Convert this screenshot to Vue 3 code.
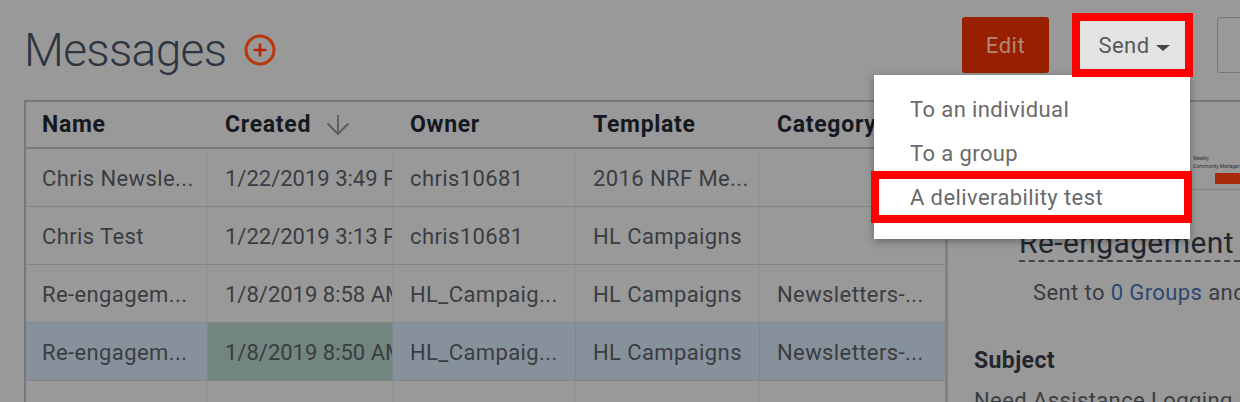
<script setup>
const columns = ['Name', 'Created', 'Owner', 'Template', 'Category']

const rows = [
  { name: 'Chris Newsle...', created: '1/22/2019 3:49 PM', owner: 'chris10681', template: '2016 NRF Me...', category: '' },
  { name: 'Chris Test', created: '1/22/2019 3:13 PM', owner: 'chris10681', template: 'HL Campaigns', category: '' },
  { name: 'Re-engagem...', created: '1/8/2019 8:58 AM', owner: 'HL_Campaig...', template: 'HL Campaigns', category: 'Newsletters-...' },
  { name: 'Re-engagem...', created: '1/8/2019 8:50 AM', owner: 'HL_Campaig...', template: 'HL Campaigns', category: 'Newsletters-...', selected: true },
  { name: '', created: '', owner: '', template: '', category: '' },
]

const sendOptions = ['To an individual', 'To a group', 'A deliverability test']
</script>

<template>
  <div class="page">
    <header class="top">
      <div class="heading">
        <h1 class="title">Messages</h1>
        <svg class="add-icon" width="32" height="32" viewBox="0 0 32 32" fill="none">
          <circle cx="16" cy="16" r="14" stroke="#b8360c" stroke-width="3" />
          <path d="M16 9.5v13M9.5 16h13" stroke="#b8240a" stroke-width="2.6" />
        </svg>
      </div>
      <div class="actions">
        <button class="btn btn-edit">Edit</button>
        <button class="btn btn-send">Send <span class="caret"></span></button>
        <button class="btn btn-more"></button>
      </div>
    </header>

    <main class="content">
      <div class="table">
        <div class="row head">
          <div v-for="col in columns" :key="col" class="cell">
            {{ col }}
            <svg v-if="col === 'Created'" class="sort" width="24" height="24" viewBox="0 0 24 24" fill="none">
              <path d="M12 2v19M1.500 10.500 12 21l10.500-10.500" stroke="#5a5a5a" stroke-width="1.800" />
            </svg>
          </div>
        </div>
        <div v-for="(row, i) in rows" :key="i" class="row body" :class="{ selected: row.selected }">
          <div class="cell">{{ row.name }}</div>
          <div class="cell created">{{ row.created }}</div>
          <div class="cell">{{ row.owner }}</div>
          <div class="cell">{{ row.template }}</div>
          <div class="cell">{{ row.category }}</div>
        </div>
      </div>

      <aside class="panel">
        <div class="thumb">
          <div class="thumb-text">
            <span>Weekly</span>
            <span>Community Manager</span>
          </div>
          <div class="thumb-btn"></div>
        </div>
        <div class="panel-title">Re-engagement Email</div>
        <p class="sent">Sent to <a class="link">0 Groups</a> and</p>
        <h3 class="label">Subject</h3>
        <p class="subject">Need Assistance Logging In?</p>
      </aside>
    </main>

    <ul class="menu">
      <li v-for="opt in sendOptions" :key="opt">{{ opt }}</li>
    </ul>

    <div class="mark mark-send"></div>
    <div class="mark mark-test"></div>
  </div>
</template>

<style>
html,
body {
  margin: 0;
  background: #999;
}
</style>

<style scoped>
.page {
  position: relative;
  width: 1240px;
  height: 402px;
  overflow: hidden;
  background: #999;
  color: #3a3d42;
  font-family: Roboto, "Liberation Sans", sans-serif;
  font-size: 22px;
  letter-spacing: 0.4px;
}

.top {
  display: flex;
  justify-content: space-between;
  height: 100px;
  padding-left: 24px;
  box-sizing: border-box;
}

.heading {
  display: flex;
  align-items: center;
  height: 100px;
}

.title {
  margin: 0;
  font-size: 46px;
  font-weight: 300;
  letter-spacing: -0.65px;
  color: #2c3540;
}

.add-icon {
  margin-left: 18px;
}

.actions {
  display: flex;
  align-items: flex-start;
  padding-top: 17px;
}

.btn {
  height: 56px;
  padding: 0;
  border: none;
  border-radius: 3px;
  font: inherit;
  font-size: 22px;
  letter-spacing: 0.5px;
}

.btn-edit {
  width: 87px;
  background: #981f00;
  color: #b08a78;
}

.btn-send {
  width: 105px;
  height: 48px;
  margin: 4px 0 0 31px;
  padding-left: 3px;
  border-radius: 0;
  background: #e3e3e3;
  color: #55585e;
}

.caret {
  display: inline-block;
  margin: 2px 0 0;
  vertical-align: middle;
  border-top: 6px solid #444;
  border-left: 7px solid transparent;
  border-right: 7px solid transparent;
}

.btn-more {
  width: 60px;
  margin-left: 32px;
  margin-right: -37px;
  background: transparent;
  border: 1px solid #777;
}

.content {
  display: flex;
  align-items: stretch;
  padding-left: 24px;
}

.table {
  flex: none;
  width: 921px;
  height: 302px;
  border: solid #787878;
  border-width: 2px 0 0 2px;
  box-sizing: border-box;
}

.row {
  display: grid;
  grid-template-columns: 181px 185px 183px 184px 185px;
  box-sizing: border-box;
}

.head {
  height: 47px;
  border-bottom: 2px solid #7a7a7a;
  font-size: 23px;
  font-weight: 700;
  letter-spacing: 0.7px;
  color: #15181e;
}

.body {
  height: 58px;
  border-bottom: 1px solid #858585;
}

.cell {
  display: flex;
  align-items: center;
  padding-left: 16px;
  white-space: nowrap;
  overflow: hidden;
  box-sizing: border-box;
}

.cell + .cell {
  padding-left: 18px;
}

.body .cell {
  padding-top: 2px;
}

.body .cell + .cell {
  padding-left: 17px;
  border-left: 1px solid #939393;
}

.body .created {
  letter-spacing: 0;
}

.sort {
  margin-left: 15px;
  flex-shrink: 0;
}

.selected {
  background: #87919b;
}

.selected .created {
  background: #72857f;
}

.selected .cell + .cell {
  border-left-color: #7e8993;
}

.panel {
  flex: 1;
  min-width: 0;
  height: 302px;
  border-left: 3px solid #828282;
  border-top: 2px solid #787878;
  overflow: hidden;
}

.thumb {
  display: flex;
  flex-direction: column;
  align-items: flex-end;
  height: 88px;
  padding-top: 52px;
  box-sizing: border-box;
  border-bottom: 1px solid #858585;
}

.thumb-text {
  display: flex;
  flex-direction: column;
  width: 47px;
  font-size: 5px;
  line-height: 8px;
  letter-spacing: 0;
  color: #333;
  white-space: nowrap;
}

.thumb-btn {
  width: 25px;
  height: 11px;
  margin-top: 3px;
  background: #a82a0a;
}

.panel-title {
  margin: 35px 0 0 71px;
  border-bottom: 2px dashed #444;
  font-size: 30px;
  line-height: 35px;
  color: #23272c;
  white-space: nowrap;
  overflow: hidden;
}

.sent {
  margin: 18px 0 0 85px;
  white-space: nowrap;
  line-height: 26px;
}

.link {
  color: #2b4870;
}

.label {
  margin: 42px 0 0 26px;
  font-size: 23px;
  line-height: 26px;
  font-weight: 700;
  color: #24272c;
}

.subject {
  margin: 14px 0 0 26px;
  white-space: nowrap;
  line-height: 26px;
}

.menu {
  position: absolute;
  left: 874px;
  top: 75px;
  width: 316px;
  height: 164px;
  margin: 0;
  padding: 13px 0 0;
  list-style: none;
  box-sizing: border-box;
  background: #fff;
  box-shadow: 0 2px 8px rgba(0, 0, 0, 0.35);
  color: #6a6a6a;
}

.menu li {
  height: 44px;
  line-height: 44px;
  padding-left: 36px;
}

.mark {
  position: absolute;
  border: 8px solid #f00;
  box-sizing: border-box;
}

.mark-send {
  left: 1072px;
  top: 13px;
  width: 121px;
  height: 64px;
}

.mark-test {
  left: 871px;
  top: 171px;
  width: 321px;
  height: 52px;
}
</style>
